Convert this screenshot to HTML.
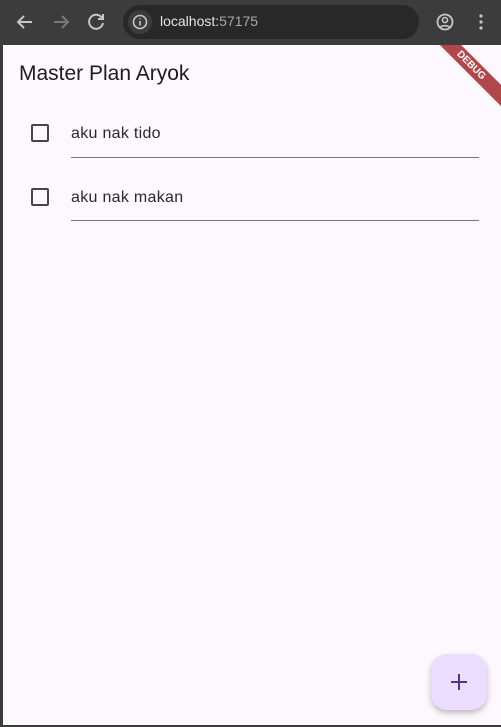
<!DOCTYPE html>
<html><head><meta charset="utf-8"><style>
*{margin:0;padding:0;box-sizing:border-box}
body{width:501px;height:727px;background:#3c3c3c;position:relative;overflow:hidden;font-family:"Liberation Sans",sans-serif}
#top{position:absolute;left:0;top:0;width:501px;height:45px;background:#3c3c3c}
#url{position:absolute;left:123px;top:5px;width:296px;height:34px;border-radius:17px;background:#282828}
#info{position:absolute;left:5px;top:5px;width:24px;height:24px;border-radius:12px;background:#3c3c3c}
#urltext{position:absolute;left:37px;top:8px;color:#e3e3e3;font-size:14px}
#page{position:absolute;left:3px;top:45px;width:498px;height:680px;background:#fdf7fe;overflow:hidden}
h1{position:absolute;left:16px;top:17px;font-weight:400;font-size:21px;color:#1d1b20}
.cb{position:absolute;left:28px;width:18px;height:18px;border:2px solid #49454f;border-radius:2px}
.t{position:absolute;left:68px;font-size:16px;color:#2a282e;letter-spacing:.3px}
.ln{position:absolute;left:68px;width:408px;height:1px;background:#79747e}
#fab{position:absolute;left:428px;top:609px;width:56px;height:56px;border-radius:16px;background:#eaddff;box-shadow:0 3px 6px rgba(0,0,0,.25)}
#dbg{position:absolute;right:-30px;top:13px;width:120px;height:15px;background:#b2474b;transform:rotate(45deg);color:#fff;font-size:10px;font-weight:bold;text-align:center;line-height:15px}
</style></head><body>
<div id="top">
<svg style="position:absolute;left:0;top:0" width="501" height="45" fill="none" stroke-width="2">
<path d="M32 22H18M24 16l-6 6 6 6" stroke="#c7c7c7"/>
<path d="M54 22h14M62 16l6 6-6 6" stroke="#7a7a7a"/>
<path d="M102 18a7 7 0 1 0 1 5M103 14v5h-5" stroke="#c7c7c7"/>
<path d="M395 14l2.3 5 5.2.5-4 3.5 1.2 5.2-4.7-2.8-4.7 2.8 1.2-5.2-4-3.5 5.2-.5z" stroke="#c7c7c7" stroke-width="1.6"/>
<circle cx="445" cy="22" r="7.5" stroke="#c7c7c7" stroke-width="1.8"/>
<circle cx="445" cy="20" r="2.5" stroke="#c7c7c7" stroke-width="1.6"/>
<path d="M440 27.5a6 4 0 0 1 10 0" stroke="#c7c7c7" stroke-width="1.6"/>
<circle cx="481" cy="16" r="1.6" fill="#c7c7c7" stroke="none"/><circle cx="481" cy="22" r="1.6" fill="#c7c7c7" stroke="none"/><circle cx="481" cy="28" r="1.6" fill="#c7c7c7" stroke="none"/>
</svg>
<div id="url"><div id="info"><svg width="24" height="24"><circle cx="12" cy="12" r="6.5" stroke="#c7c7c7" stroke-width="1.6" fill="none"/><path d="M12 11v4.5M12 8.2v1" stroke="#c7c7c7" stroke-width="1.6"/></svg></div><div id="urltext">localhost:<span style="color:#a8a8a8">57175</span></div></div>
</div>
<div id="page">
<h1>Master Plan Aryok</h1>
<div class="cb" style="top:79px"></div>
<div class="t" style="top:80px">aku nak tido</div>
<div class="ln" style="top:112px"></div>
<div class="cb" style="top:143px"></div>
<div class="t" style="top:144px">aku nak makan</div>
<div class="ln" style="top:175px"></div>
<div id="fab"><svg width="56" height="56"><path d="M28 20v16M20 28h16" stroke="#4f378b" stroke-width="2"/></svg></div>
<div id="dbg">DEBUG</div>
</div>
</body></html>
